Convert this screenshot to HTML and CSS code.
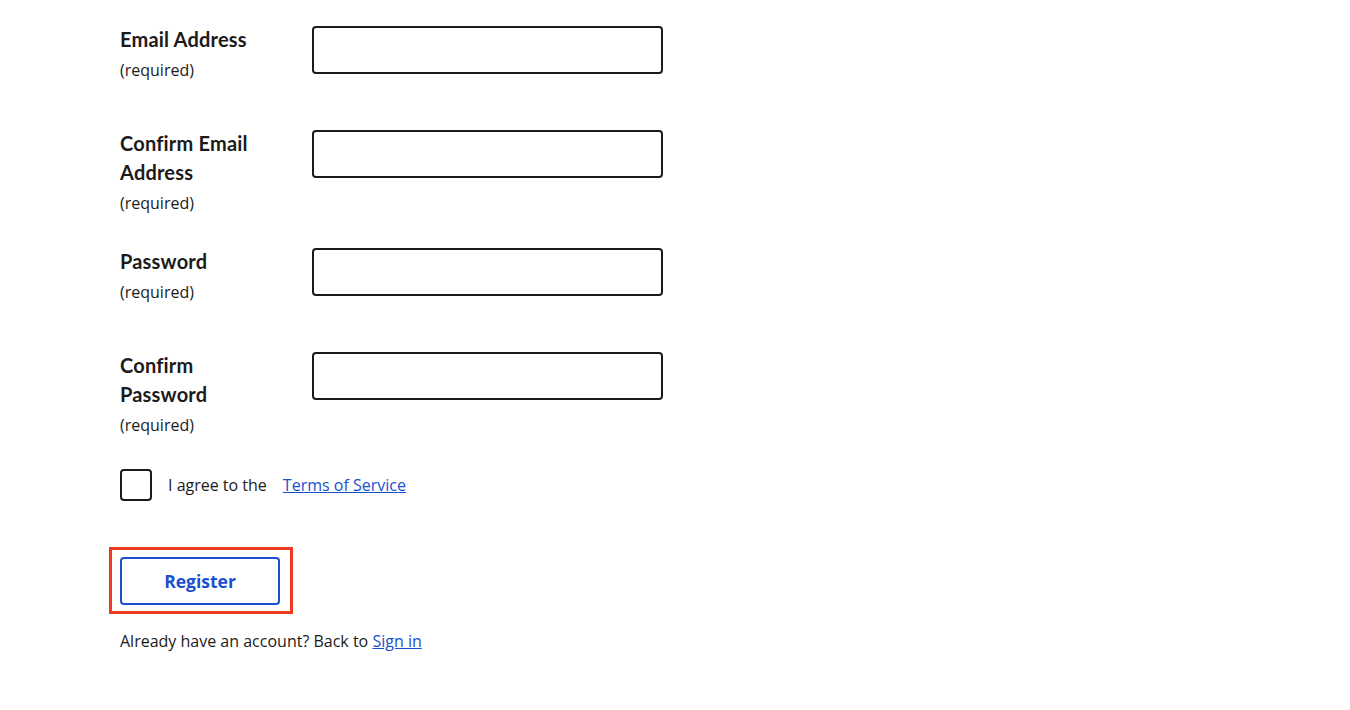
FILE: index.html
```html
<!DOCTYPE html>
<html lang="en">
<head>
<meta charset="utf-8">
<title>Register</title>
<link rel="stylesheet" href="styles.css">
</head>
<body>
<main class="page">
  <form class="form">
    <div class="row">
      <div class="label-block">
        <label class="label" for="email">Email Address</label>
        <div class="hint">(required)</div>
      </div>
      <input class="input" id="email" type="text">
    </div>
    <div class="row">
      <div class="label-block">
        <label class="label" for="email2">Confirm Email Address</label>
        <div class="hint">(required)</div>
      </div>
      <input class="input" id="email2" type="text">
    </div>
    <div class="row">
      <div class="label-block">
        <label class="label" for="pw">Password</label>
        <div class="hint">(required)</div>
      </div>
      <input class="input" id="pw" type="password">
    </div>
    <div class="row">
      <div class="label-block">
        <label class="label" for="pw2">Confirm Password</label>
        <div class="hint">(required)</div>
      </div>
      <input class="input" id="pw2" type="password">
    </div>
    <div class="agree">
      <span class="checkbox"></span>
      <span class="agree-text">I agree to the</span>
      <a class="link" href="#">Terms of Service</a>
    </div>
    <div class="highlight">
      <button class="button" type="button">Register</button>
    </div>
    <p class="signin">Already have an account? Back to <a class="link" href="#">Sign in</a></p>
  </form>
</main>
</body>
</html>
```
FILE: styles.css
```css
html, body {
  margin: 0;
  padding: 0;
  background: #ffffff;
}
body {
  font-family: "Open Sans", "Noto Sans", sans-serif;
  color: #1b1b1b;
}
.page {
  padding: 25px 0 0 120px;
}
.form {
  display: flex;
  flex-direction: column;
}
.row {
  display: flex;
  align-items: flex-start;
  gap: 32px;
  min-height: 75px;
  margin-bottom: 29px;
}
.label-block {
  width: 160px;
  display: flex;
  flex-direction: column;
}
.label {
  font-family: "Lato", sans-serif;
  font-weight: 700;
  font-size: 20px;
  letter-spacing: 0.2px;
  line-height: 29px;
  color: #1b1b1b;
  padding-right: 16px;
}
.hint {
  font-size: 16px;
  line-height: 29px;
  margin-top: 2px;
  color: #1b1b1b;
}
.input {
  box-sizing: border-box;
  width: 351px;
  height: 48px;
  margin-top: 1px;
  border: 2px solid #1b1b1b;
  border-radius: 4px;
  background: #fff;
}
.agree {
  display: flex;
  align-items: center;
  height: 32px;
  font-size: 16px;
}
.checkbox {
  box-sizing: border-box;
  width: 32px;
  height: 32px;
  border: 2px solid #1b1b1b;
  border-radius: 4px;
  margin-right: 16px;
}
.agree-text {
  margin-right: 16px;
}
.link {
  color: #1a4fd0;
  text-decoration: underline;
}
.highlight {
  align-self: flex-start;
  margin: 46px 0 0 -11px;
  padding: 7px 10px 6px 8px;
  border: 3px solid #ef3a22;
}
.button {
  box-sizing: border-box;
  width: 160px;
  height: 48px;
  border: 2px solid #1a4fd0;
  border-radius: 4px;
  background: #fff;
  color: #1a4fd0;
  font-family: "Open Sans", sans-serif;
  font-weight: 700;
  font-size: 17.5px;
  display: block;
}
.signin {
  margin: 15px 0 0;
  font-size: 16px;
  line-height: 24px;
}
```
